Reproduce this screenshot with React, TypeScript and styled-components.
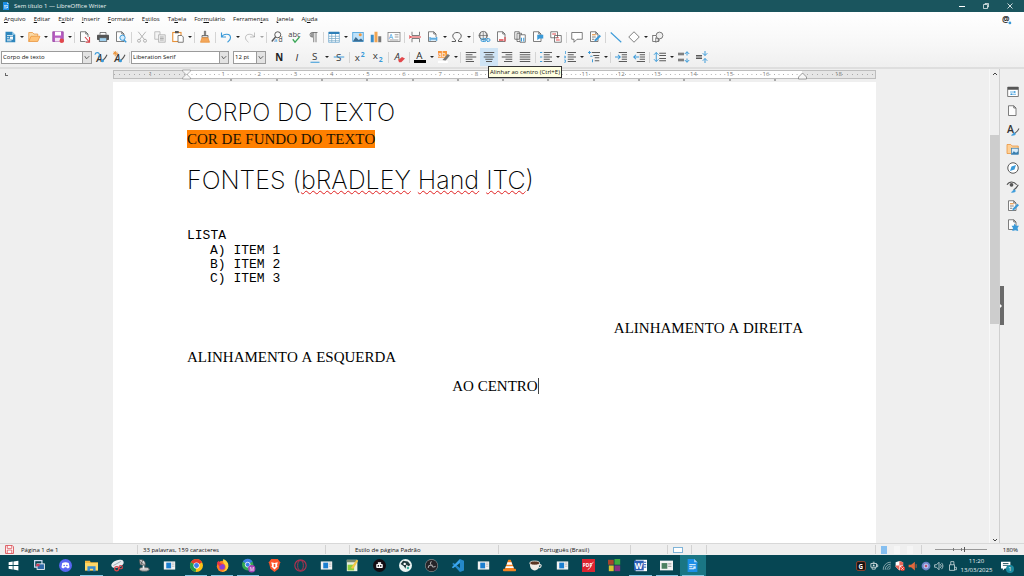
import React from "react";
import styled, { createGlobalStyle, css } from "styled-components";

const Global = createGlobalStyle`
  *, *::before, *::after { box-sizing: border-box; }
  body { margin: 0; background: #efefef; font-family: "Open Sans", "Noto Sans", sans-serif; font-size: 6px; font-weight: 500; color: #111; }
  button, select, input { font: inherit; color: inherit; margin: 0; padding: 0; border: 0; background: none; border-radius: 0; }
`;

const B = "#3a9ad9";
const G = "#555";
const O = "#e8923a";

const line = (d: string, stroke = G, w = 1) => <path d={d} stroke={stroke} strokeWidth={w} fill="none" />;
const sheet = (x = 2, y = 1) => (
  <path d={`M${x} ${y}h7l3 3v10h-10z M${x + 7} ${y}v3h3`} fill="#fdfdfd" stroke={G} strokeWidth="1" />
);
const bars = (rows: number[][], stroke = G) => (
  <>{rows.map(([x, y, w]) => <path key={`${x}-${y}`} d={`M${x} ${y}h${w}`} stroke={stroke} strokeWidth="1.3" />)}</>
);
const glyph = (t: string, x: number, y: number, size: number, fill = "#444", extra: React.SVGProps<SVGTextElement> = {}) => (
  <text x={x} y={y} fontSize={size} fill={fill} fontFamily="Open Sans, sans-serif" {...extra}>{t}</text>
);
const windowApp = (
  <>
    <rect x="1" y="3" width="14" height="10" fill="#f2f2f2" />
    <rect x="4" y="4.500" width="6" height="7" fill="#1b7fd0" />
    <path d="M11 5h3M11 7h3M11 9h3" stroke="#bbb" />
  </>
);

const icons: Record<string, React.ReactNode> = {
  doc: <><path d="M2 0h8l4 4v12H2z" fill="#1b8fe8" /><path d="M10 0l4 4h-4z" fill="#a7d5f5" /><path d="M4 7h8M4 9.500h4M4 12h6" stroke="#fff" strokeWidth="1.200" /><rect x="9" y="9" width="3" height="3" fill="#d7ecfb" /></>,
  new: <><path d="M2 1h9l4 4v10H2z" fill="#2e86bd" /><path d="M11 1l4 4h-4z" fill="#9fd0ee" /><path d="M4 6h8M4 8.500h3M4 11h8M4 13h6" stroke="#fff" /><rect x="8" y="7.500" width="4" height="3" fill="#fff" /></>,
  open: <><path d="M1 14V2h5l2 2h5v3" fill="#fbd9a5" stroke={O} /><path d="M1 14l3-7h12l-3 7z" fill="#ffc377" stroke={O} /></>,
  save: <><path d="M1 1h14v13H1z" fill="#b75cc2" stroke="#93409e" /><rect x="4" y="1" width="8" height="5" fill="#fff" /><rect x="4" y="9" width="7" height="5" fill="#f3e4f5" /><circle cx="13" cy="13" r="3" fill="#e2474b" /></>,
  pdf: <>{sheet(2, 1)}<path d="M8 8h6v6H8z" fill="#fff" /><path d="M8 8l6 7M14 8v7H9" stroke="#d9434a" strokeWidth="1.5" fill="none" /></>,
  print: <><path d="M4 5V2h8v3" fill="#fff" stroke={G} /><rect x="0" y="5" width="16" height="7" rx="1" fill="#555" /><rect x="3" y="9" width="10" height="5" fill="#9fd0ee" stroke="#555" /></>,
  preview: <>{sheet(2, 1)}<circle cx="10" cy="9" r="3.500" fill="#d7ecfb" stroke={B} strokeWidth="1.300" /><path d="M12 12l3 3" stroke={B} strokeWidth="2" /></>,
  cut: <g opacity=".55">{line("M3 1l8 10M13 1L5 11")}<circle cx="4" cy="13" r="2" fill="none" stroke={G} /><circle cx="12" cy="13" r="2" fill="none" stroke={G} /></g>,
  copy: <g opacity=".45"><path d="M1 1h7v10H1z" fill="#eee" stroke={G} /><path d="M6 5h9v10H6z" fill="#ddd" stroke={G} />{bars([[8, 8, 5], [8, 10, 5], [8, 12, 5]])}</g>,
  paste: <><rect x="1" y="2" width="11" height="12" fill="#fff" stroke={O} strokeWidth="1.500" /><rect x="4" y="0" width="5" height="3" fill={G} /><path d="M8 6h5l2 2v7H8z" fill="#fff" stroke={G} /></>,
  brush: <><path d="M7 0h2v6H7z" fill="#777" stroke={G} strokeWidth=".5" /><path d="M4 6h8v3H4z" fill="#ddd" stroke={G} /><path d="M4 9h8l2 6H2z" fill="#f3a75c" stroke={O} /></>,
  undo: <>{line("M2 2v6h6M2 8c3-5 12-5 12 1 0 3-2 4-4 6", B, 1.5)}</>,
  redo: <g opacity=".35">{line("M14 2v6H8M14 8C11 3 2 3 2 9c0 3 2 4 4 6", G, 1.3)}</g>,
  find: <><circle cx="9" cy="5" r="4" fill="none" stroke={G} strokeWidth="1.300" />{line("M6 8l-5 6", G, 1.8)}{glyph("a", 4, 15, 8, B)}{glyph("d", 10, 15, 9)}</>,
  spell: <>{glyph("abc", -1, 8, 10)}{line("M5 11l3 4 6-7", "#3aa757", 1.7)}</>,
  pilcrow: <><path d="M8 2a3 3 0 0 0 0 6z" fill="#999" />{line("M14 2H7a3 3 0 0 0 0 6h1M9 2v13M12 2v13")}</>,
  table: <><rect x="1" y="2" width="14" height="13" fill="#fff" stroke="#6aa6cf" /><rect x="1" y="1" width="14" height="3" fill="#2e7fb8" />{line("M1 7h14M1 10h14M1 13h14M5 4v11M10 4v11", "#77a9c8")}</>,
  image: <><rect x="1" y="2" width="14" height="12" fill="#bfe2fa" stroke={B} /><path d="M1 14l4-6 4 4 3-2 3 3v1z" fill="#3b6d93" /><circle cx="11" cy="5" r="2" fill="#f09a42" /></>,
  chart: <><rect x="1" y="5" width="4" height="10" fill="#3a8dca" /><rect x="6" y="1" width="4" height="14" fill="#f2a553" /><rect x="11" y="7" width="4" height="8" fill="#777" /></>,
  textbox: <><rect x="0" y="2" width="16" height="12" fill="#fff" stroke="#777" />{glyph("A", 1, 11, 9, B)}{bars([[9, 5, 5], [9, 8, 5], [2, 12, 12]], "#999")}</>,
  pagebreak: <>{line("M4 1v5h10V1M4 15v-5h10v5")}{line("M0 8h16", "#e2474b", 1.4)}{line("M0 6l3 2-3 2", "#e2474b")}</>,
  field: <>{sheet(2, 1)}<path d="M4 8h9v5H4z" fill="#cfe7f8" />{line("M4 8v5M13 8v5M5 10.500h7", B, 1.4)}</>,
  omega: <>{line("M1 14h5v-2C0 8 2 2 8 2s8 6 2 10v2h5", G, 1.3)}</>,
  link: <><circle cx="7" cy="6" r="5.500" fill="#eee" stroke={G} />{line("M1 6h12M7 1v11M4 1c-2 4-2 7 0 10M10 1c2 4 2 7 0 10", G, .8)}{line("M6 12h8M7 10h2a2 2 0 0 1 0 4H6a2 2 0 0 1 0-4M12 10h2a2 2 0 0 1 0 4h-2", B, 1.3)}</>,
  footnote: <>{sheet(2, 1)}<rect x="4" y="11" width="6" height="2" fill="#e2474b" />{line("M12 8v6", "#e2474b", 1.5)}</>,
  endnote: <><path d="M1 1h6v10H1zM4 3h6v11H4z" fill="#fff" stroke={G} /><path d="M8 5h7v10H8z" fill="#fff" stroke={G} />{line("M10 9v5M13 9v5", B, 1.4)}</>,
  bookmark: <>{sheet(2, 1)}<path d="M7 5v7l3-2h5V5z" fill={B} /></>,
  crossref: <><path d="M1 1h9v8H1zM6 6h9v9H6z" fill="#fff" stroke={G} />{line("M3 4h5M8 12h5", "#e2474b", 1.5)}{line("M8 9h4", "#e2474b")}</>,
  comment: <path d="M1 2h14v9H8l-4 4v-4H1z" fill="#fff" stroke={G} />,
  track: <>{sheet(2, 1)}{line("M4 5h5", O, 1.5)}{line("M4 8h5M4 11h3")}<path d="M7 14l1-3 6-6 2 2-6 6z" fill={B} /></>,
  lineTool: line("M1 2l14 13", B, 1.4),
  shape: <path d="M8 1l7 7-7 7-7-7z" fill="#fff" stroke={G} />,
  shapes: <><rect x="1" y="6" width="8" height="8" fill="#fff" stroke={G} /><circle cx="10" cy="6" r="4.500" fill="#eee" stroke={G} /><path d="M5 9l5 3-5 3z" fill="#fff" stroke={G} /></>,
  updStyle: <>{glyph("A", 2, 14, 13, "#333", { fontStyle: "italic", fontWeight: 600 })}{line("M0 5a3 3 0 1 1 4 3", B, 1.5)}{line("M10 13c1-2 3-1 6-8", G, 1.5)}<circle cx="10" cy="13" r="2" fill={B} /></>,
  newStyle: <>{glyph("A", 2, 14, 13, "#333", { fontStyle: "italic", fontWeight: 600 })}{line("M3 0v7M0 3h7M1 1l4 4M5 1L1 5", O, 1.3)}{line("M10 13c1-2 3-1 6-8", G, 1.5)}<circle cx="10" cy="13" r="2" fill={B} /></>,
  bold: glyph("N", 3, 13, 13, "#222", { fontWeight: 700 }),
  italic: glyph("I", 6, 13, 13, "#222", { fontStyle: "italic" }),
  under: <>{glyph("S", 4, 12, 13, "#333")}{line("M2 15h12", B, 1.4)}</>,
  strike: <>{glyph("S", 4, 13, 13, "#333")}{line("M1 8h14", B, 1.3)}</>,
  sup: <>{glyph("x", 1, 13, 13, "#333")}{glyph("2", 9, 8, 9, B, { fontWeight: 700 })}</>,
  sub: <>{glyph("x", 1, 11, 13, "#333")}{glyph("2", 9, 15, 9, B, { fontWeight: 700 })}</>,
  clear: <>{glyph("A", 2, 12, 13, "#333", { fontStyle: "italic" })}<path d="M7 12l5-4 4 2-5 5H8z" fill="#e2474b" /></>,
  color: <>{glyph("A", 3, 10, 13, "#222")}<rect x="0" y="12" width="16" height="4" fill="#000" /></>,
  highlight: <><rect x="0" y="0" width="12" height="9" fill="#f7953a" />{glyph("ab", 0, 8, 9, "#fff")}<path d="M6 12l7-8 3 2-6 7z" fill="#777" /><rect x="0" y="13" width="13" height="3" fill="#fff" /></>,
  left: bars([[1, 2, 14], [1, 5, 9], [1, 8, 14], [1, 11, 9], [1, 14, 11]]),
  center: bars([[1, 2, 14], [3, 5, 10], [1, 8, 14], [3, 11, 10], [4, 14, 8]]),
  right: bars([[1, 2, 14], [6, 5, 9], [1, 8, 14], [6, 11, 9], [4, 14, 11]]),
  justify: bars([[1, 2, 14], [1, 5, 14], [1, 8, 14], [1, 11, 14], [1, 14, 14]]),
  bullets: <>{bars([[5, 2, 11], [5, 5, 8], [5, 8, 11], [5, 11, 8], [5, 14, 11]])}{bars([[0, 2, 3], [0, 8, 3], [0, 14, 3]], B)}</>,
  numbers: <>{bars([[5, 2, 11], [5, 5, 8], [5, 8, 11], [5, 11, 8], [5, 14, 11]])}{line("M2 0v4M0 7h2v2H0M0 12h2v3H0", B)}</>,
  outline: <>{bars([[5, 2, 11], [7, 6, 8], [9, 9, 6], [9, 13, 6]])}{line("M0 2h4M2 0v4M3 7h3M6 11v4", B, 1.3)}</>,
  indent: <>{bars([[5, 2, 11], [9, 5, 7], [9, 11, 7], [5, 14, 11], [9, 8, 7]])}{line("M0 8h7M4 5l3 3-3 3", B, 1.4)}</>,
  outdent: <>{bars([[5, 2, 11], [9, 5, 7], [9, 11, 7], [5, 14, 11], [9, 8, 7]])}{line("M8 8H1M4 5L1 8l3 3", B, 1.4)}</>,
  spacing: <>{bars([[7, 3, 9], [7, 6, 9], [7, 10, 9], [7, 13, 9]])}{line("M3 2v12M0 5l3-3 3 3M0 11l3 3 3-3", B, 1.3)}</>,
  incPara: <>{bars([[0, 3, 8], [0, 5, 8], [0, 11, 8], [0, 13, 8]])}{line("M12 1v5M9 4l3-3 3 3M12 15v-5M9 12l3 3 3-3", B, 1.3)}</>,
  decPara: <>{bars([[0, 6, 8], [0, 10, 8], [0, 8, 8]])}{line("M12 0v6M9 3l3 3 3-3M12 16v-6M9 13l3-3 3 3", B, 1.3)}</>,
  props: <><rect x="1" y="2" width="14" height="12" fill="#fff" stroke={G} /><rect x="1" y="1" width="14" height="4" fill={G} />{line("M4 8h8M4 11h8", B)}{line("M10 7v2M6 10v2", B, 1.5)}</>,
  page: sheet(2, 1),
  styles: <>{glyph("A", 0, 12, 14, "#333", { fontWeight: 600 })}{line("M10 13c1-2 3-1 6-7", G, 1.4)}<path d="M6 15c2 0 2-4 4-3s2 3-4 3z" fill={B} stroke={B} /></>,
  gallery: <><path d="M0 14V2h5l2 2h8v10z" fill="#ffd096" stroke={O} /><rect x="6" y="7" width="9" height="8" fill="#d7ecfb" stroke="#3a7fb0" /><path d="M6 15l3-4 3 2 3-2v4z" fill="#3a7fb0" /></>,
  compass: <><circle cx="8" cy="8" r="7" fill="#fff" stroke={G} strokeWidth="1.300" /><path d="M12 4l-2 6-6 2 2-6z" fill={B} /></>,
  inspector: <>{line("M0 5c3-5 9-5 13 0", G, 1.5)}<circle cx="6" cy="5" r="2.500" fill={G} />{line("M9 12c1-2 3-1 6-7", G, 1.6)}<path d="M6 15c2 0 2-4 4-3s2 3-4 3z" fill={B} stroke={B} /></>,
  access: <>{sheet(2, 1)}<path d="M10 6l2 3h4l-2 3 1 4-4-1-4 1 1-4-2-3h3z" fill={B} /></>,
  at: <>{glyph("@", 0, 13, 15, "#333", { fontWeight: 700 })}<circle cx="14" cy="14" r="2.500" fill={B} /></>,
  floppy: <><path d="M1 1h12l2 2v12H1z" fill="#fff" stroke="#d9434a" strokeWidth="1.500" />{line("M4 1v5h8V1M4 15v-6h8v6", "#d9434a", 1.3)}</>,
  start: <path d="M2 4l5-1v4.500H2zM8 3l6-1v5.500H8zM2 8.500h5V13l-5-1zM8 8.500h6V14l-6-1z" fill="#fff" />,
  taskview: <><rect x="2" y="2" width="9" height="8" fill="none" stroke="#cfdcf4" strokeWidth="1.500" /><rect x="5" y="6" width="9" height="7" fill="#2e69a8" stroke="#fff" /><rect x="4" y="6" width="4" height="3" fill="#d43c59" /></>,
  discord: <><circle cx="8" cy="8" r="8" fill="#5865f2" /><path d="M4 5c3-1.500 5-1.500 8 0l1 5c-1 1-2 1.500-3 1.500L9 10H7l-1 1.500c-1 0-2-.5-3-1.500z" fill="#fff" /><circle cx="6.300" cy="8" r="1" fill="#5865f2" /><circle cx="9.700" cy="8" r="1" fill="#5865f2" /></>,
  explorer: <><path d="M0 2h6l1 2h9v10H0z" fill="#f5b83d" /><path d="M0 5h16v9H0z" fill="#ffd968" /><path d="M3 9h10v6h-3v-3H6v3H3z" fill="#3b8dd0" /></>,
  snip: <><ellipse cx="8" cy="6" rx="8" ry="4.500" fill="#e8ecef" transform="rotate(-20 8 6)" />{line("M3 8l9-5", "#9babb5", 1.2)}<circle cx="7" cy="12" r="2.500" fill="none" stroke="#d9434a" strokeWidth="1.500" /><circle cx="12" cy="10" r="2" fill="none" stroke="#d9434a" strokeWidth="1.500" /></>,
  satellite: <><path d="M3 1c5-1 8 2 7 7L4 7z" fill="#ddd" stroke="#555" />{line("M4 3l6 5M7 1l-2 6", "#555")}<ellipse cx="9" cy="12.500" rx="6" ry="2.500" fill="#c9c9c9" stroke="#555" />{line("M8 12V8", "#eee", 2)}</>,
  win: windowApp,
  chrome: <><circle cx="8" cy="8" r="8" fill="#fbc116" /><path d="M8 8L1 4a8 8 0 0 1 14 0z" fill="#e33b2e" /><path d="M8 8L1 4a8 8 0 0 0 6 12z" fill="#229a4c" /><circle cx="8" cy="8" r="3.800" fill="#fff" /><circle cx="8" cy="8" r="3" fill="#3b7ded" /></>,
  firefox: <><circle cx="8" cy="9" r="7" fill="#ff7b22" /><path d="M9 0c5 2 7 6 6 10-1 4-5 6-8 5 5 0 6-5 4-8-2-2-3-4-2-7z" fill="#ffd23a" /><circle cx="7.500" cy="9.500" r="3.500" fill="#8a3fd8" /><path d="M1 5l2-3 2 3 3 1-4 3z" fill="#e8324b" /></>,
  chromeM: <><circle cx="7" cy="7" r="7" fill="#34a853" /><path d="M7 7L1 3a7 7 0 0 1 12 0z" fill="#3f7fe8" /><circle cx="7" cy="7" r="3" fill="#3b7ded" stroke="#fff" /><circle cx="12" cy="12" r="4.500" fill="#a645b8" />{glyph("M", 9.5, 14.5, 6, "#fff")}</>,
  brave: <><path d="M4 0h8l3 4-2 8-5 4-5-4-2-8z" fill="#fb542b" /><path d="M4 4l4 1 4-1-1 4 1 1-4 4-4-4 1-1z" fill="#fff" /><path d="M7 6h2v4H7z" fill="#fb542b" /></>,
  opera: <><circle cx="8" cy="8" r="7" fill="none" stroke="#b0304f" strokeWidth="1.400" /><ellipse cx="8" cy="8" rx="3.500" ry="6" fill="none" stroke="#b0304f" strokeWidth="1.200" /></>,
  notepad: <><rect x="1" y="1" width="13" height="14" fill="#e8efe0" /><rect x="1" y="1" width="13" height="3" fill="#7a8a70" /><path d="M2 7h8v7H2z" fill="#8fce3d" /><path d="M6 11l7-10 2 1-6 10z" fill="#f2c744" /></>,
  robot: <><circle cx="8" cy="8" r="8" fill="#120c12" /><rect x="4" y="6" width="8" height="5" rx="1" fill="#fff" /><path d="M6 4h4v2H6z" fill="#fff" /><circle cx="6.500" cy="8.500" r="1" fill="#120c12" /><circle cx="9.500" cy="8.500" r="1" fill="#120c12" /></>,
  dino: <><circle cx="8" cy="8" r="8" fill="#e9f3f2" /><path d="M2 6l3-4 6 1 3 4-2 2-3-2-1 5-2-3z" fill="#1f3a3d" /><circle cx="7" cy="6" r="1.500" fill="#fff" /><circle cx="11" cy="11" r="1.500" fill="#3cb4a0" /></>,
  obs: <><circle cx="8" cy="8" r="8" fill="#8b8b8d" /><circle cx="8" cy="8" r="7.200" fill="#252428" />{line("M8 3c-2 2-2 4 1 5M13 9c-3 2-5 0-4-2M4 11c0-3 2-4 5-3", "#a9a9ab", 1.3)}</>,
  vscode: <><path d="M11 0l5 2v12l-5 2-8-8.500L1.500 6 3 4.500 11 11z" fill="#2489ca" /><path d="M11 0v5L2.500 11.500 1 10z" fill="#3ba6ee" /></>,
  vlc: <><path d="M6.500 1h3L14 13H2z" fill="#f58220" /><path d="M5.500 4h5l1 3h-7zM3.500 9h9l.8 2H2.800z" fill="#fff" /><rect x="0" y="12" width="16" height="3" rx="1" fill="#f58220" /></>,
  coffee: <><path d="M1 5h12c0 6-2 9-6 9S1 11 1 5z" fill="#f0ece7" /><ellipse cx="7" cy="5" rx="6" ry="2.500" fill="#5a3522" stroke="#f0ece7" />{line("M12 7c4-1 4 3 0 4", "#f0ece7", 1.3)}</>,
  pdfx: <><rect width="16" height="16" fill="#dc2430" />{glyph("PDF", 1, 10, 6, "#fff", { fontWeight: 700 })}{line("M7 13c5-2 4-8 7-9", "#fff")}</>,
  squares: <><rect x="0" y="1" width="7" height="6" fill="#a5442d" /><rect x="8" y="0" width="7" height="7" fill="#3da93e" /><rect x="1" y="8" width="6" height="7" fill="#d9c331" /><rect x="8" y="8" width="7" height="7" fill="#8a3080" /></>,
  word: <><rect x="2" y="1" width="14" height="14" fill="#fff" /><rect x="0" y="2" width="12" height="12" fill="#2b5fb8" />{glyph("W", 1, 12, 10, "#fff", { fontWeight: 700 })}{bars([[12, 4, 3], [12, 7, 3], [12, 10, 3]], "#2b5fb8")}</>,
  card: <><rect x="0" y="2" width="16" height="12" fill="#f3f3f3" /><rect x="2" y="5" width="7" height="7" fill="#4c8060" />{bars([[10, 6, 4], [10, 9, 4]], "#999")}</>,
  gapp: <><rect x="1" y="1" width="14" height="14" rx="2" fill="#111" stroke="#a4442c" strokeWidth="1.500" />{glyph("G", 4, 12, 10, "#fff", { fontWeight: 700 })}</>,
  cam: <>{line("M3 4h9v6H3zM5 10v3h5v-3M12 6h2v3h-2M6 2h3", "#d9e4e6", 1.3)}<circle cx="7.500" cy="7" r="1.500" fill="#d9e4e6" /></>,
  wifi: <>{line("M2 14C2 7 7 2 14 2M5 14c0-5 4-9 9-9M8 14c0-3 3-6 6-6M11 14c0-2 1-3 3-3", "#b5c8cc", 1.2)}</>,
  shield: <><path d="M1 2l6-2 6 2v7l-6 6-6-6z" fill="#fff" /><path d="M7 0l6 2v5H7zM1 7h6v8L1 9z" fill="#e8685a" /><circle cx="12" cy="12" r="4" fill="#e33b2e" />{line("M10 10l4 4M14 10l-4 4", "#fff")}</>,
  horn: <><path d="M1 6h4l6-5v14l-6-5H1z" fill="#e2683c" />{line("M13 5v6", "#e2683c", 1.3)}</>,
  disc: <><circle cx="8" cy="8" r="7" fill="#6f83c8" /><circle cx="8" cy="8" r="4" fill="#b6c4ec" /><circle cx="8" cy="8" r="2" fill="#c04d70" /></>,
  volume: <>{line("M1 6h3l4-4v12l-4-4H1zM10 5c2 2 2 4 0 6M12 3c3 3 3 7 0 10", "#d9e4e6", 1.2)}</>,
  usb: <>{line("M4 6h8v9H4zM6 6V1h5v5M12 10h3v4h-3", "#d9e4e6", 1.2)}</>,
  notify: <><path d="M0 1h15v11H6l-3 3v-3H0z" fill="#fff" />{bars([[3, 4, 9], [3, 7, 9]], "#0b4450")}</>,
  hour: <path d="M1 0h14v2L9 8l6 6v2H1v-2l6-6-6-6z" fill="#f7f7f7" stroke="#777" />,
};

const Svg = styled.svg<{ $s: number }>`
  display: block;
  flex: none;
  width: ${(p) => p.$s}px;
  height: ${(p) => p.$s}px;
  overflow: visible;
`;
const Icon = ({ name, size = 12 }: { name: string; size?: number }) => (
  <Svg $s={size} viewBox="0 0 16 16" aria-hidden="true">{icons[name]}</Svg>
);

const Window = styled.div`
  display: flex;
  flex-direction: column;
  height: 100vh;
  overflow: hidden;
`;
const TitleBar = styled.header`
  flex: none;
  display: flex;
  align-items: center;
  gap: 4px;
  height: 12px;
  padding: 0 4px 0 2px;
  background: #1a555e;
  color: #eef5f5;
  white-space: nowrap;
`;
const Title = styled.h1`
  flex: 1;
  margin: 0;
  font-size: 6px;
  font-weight: 400;
`;
const Caption = styled.button`
  display: flex;
  justify-content: center;
  width: 20px;
`;
const Chrome = styled.div`
  flex: none;
  background: linear-gradient(#ffffff, #f7f7f7 60%, #efefef);
  border-bottom: 2px solid #dedede;
`;
const MenuBar = styled.nav`
  display: flex;
  align-items: center;
  gap: 8px;
  height: 15px;
  padding: 0 13px 0 4px;
  white-space: nowrap;
`;
const MenuItem = styled.button`
  line-height: 9px;
  u { text-underline-offset: 1px; }
`;
const Spacer = styled.span`
  flex: 1;
`;
const Toolbar = styled.div`
  display: flex;
  align-items: center;
  height: 20px;
  padding-left: 1px;
`;
const ToolButton = styled.button<{ $on?: boolean }>`
  flex: none;
  display: flex;
  align-items: center;
  justify-content: center;
  width: 18px;
  height: 18px;
  ${(p) => p.$on && css`background: #cfe4f5;`}
`;
const Arrow = styled.button<{ $dim?: boolean }>`
  flex: none;
  width: 6px;
  height: 18px;
  display: flex;
  align-items: center;
  justify-content: center;
  opacity: ${(p) => (p.$dim ? 0.4 : 1)};
  &::before {
    content: "";
    border: 2px solid transparent;
    border-top-color: #222;
    border-bottom-width: 0;
  }
`;
const Divider = styled.span`
  flex: none;
  width: 1px;
  height: 11px;
  margin: 0 1px;
  background: #d4d4d4;
`;
const Combo = styled.label<{ $w: number }>`
  flex: none;
  position: relative;
  width: ${(p) => p.$w}px;
  height: 13px;
  margin-right: 4px;
  border: 1px solid #9b9b9b;
  background: #fff;
  &:first-child { margin-right: 0; }
  select {
    display: block;
    width: 100%;
    height: 11px;
    padding-left: 1px;
    appearance: none;
    outline: 0;
  }
  svg {
    position: absolute;
    top: 0;
    right: 0;
    width: 9px;
    height: 11px;
    background: #e3e3e3;
    border-left: 1px solid #9b9b9b;
    pointer-events: none;
  }
`;

type Tool = { i: string; t: string; arrow?: boolean; dim?: boolean; on?: boolean } | "|";
const standard: Tool[] = [
  { i: "new", t: "Novo", arrow: true }, { i: "open", t: "Abrir", arrow: true }, { i: "save", t: "Salvar", arrow: true }, "|",
  { i: "pdf", t: "Exportar como PDF" }, { i: "print", t: "Imprimir" }, { i: "preview", t: "Visualizar impressão" }, "|",
  { i: "cut", t: "Cortar" }, { i: "copy", t: "Copiar" }, { i: "paste", t: "Colar", arrow: true }, "|",
  { i: "brush", t: "Clonar formatação" }, "|",
  { i: "undo", t: "Desfazer", arrow: true }, { i: "redo", t: "Refazer", arrow: true, dim: true }, "|",
  { i: "find", t: "Localizar e substituir" }, { i: "spell", t: "Ortografia" }, { i: "pilcrow", t: "Marcas de formatação" }, "|",
  { i: "table", t: "Inserir tabela", arrow: true }, { i: "image", t: "Inserir imagem" }, { i: "chart", t: "Inserir gráfico" }, { i: "textbox", t: "Inserir caixa de texto" }, "|",
  { i: "pagebreak", t: "Inserir quebra de página" }, { i: "field", t: "Inserir campo", arrow: true }, { i: "omega", t: "Inserir caractere especial", arrow: true }, "|",
  { i: "link", t: "Inserir hiperlink" }, { i: "footnote", t: "Inserir nota de rodapé" }, { i: "endnote", t: "Inserir nota de fim" }, { i: "bookmark", t: "Inserir marcador" }, { i: "crossref", t: "Inserir referência" }, "|",
  { i: "comment", t: "Inserir anotação" }, { i: "track", t: "Registrar alterações" }, "|",
  { i: "lineTool", t: "Inserir linha" }, { i: "shape", t: "Formas simples", arrow: true }, { i: "shapes", t: "Mostrar funções de desenho" },
];
const formatting: Tool[] = [
  { i: "bold", t: "Negrito" }, { i: "italic", t: "Itálico" }, { i: "under", t: "Sublinhado", arrow: true }, { i: "strike", t: "Tachado" }, "|",
  { i: "sup", t: "Sobrescrito" }, { i: "sub", t: "Subscrito" }, "|", { i: "clear", t: "Limpar formatação" }, "|",
  { i: "color", t: "Cor da fonte", arrow: true }, { i: "highlight", t: "Cor de realce", arrow: true }, "|",
  { i: "left", t: "Alinhar à esquerda" }, { i: "center", t: "Alinhar ao centro", on: true }, { i: "right", t: "Alinhar à direita" }, { i: "justify", t: "Justificar" }, "|",
  { i: "bullets", t: "Marcadores", arrow: true }, { i: "numbers", t: "Numeração", arrow: true }, { i: "outline", t: "Estrutura de tópicos", arrow: true }, "|",
  { i: "indent", t: "Aumentar recuo" }, { i: "outdent", t: "Diminuir recuo" }, "|",
  { i: "spacing", t: "Entrelinhas", arrow: true }, { i: "incPara", t: "Aumentar espaçamento" }, { i: "decPara", t: "Diminuir espaçamento" },
];
const Anchor = styled.span`
  position: relative;
  flex: none;
`;
const Tooltip = styled.span`
  position: absolute;
  z-index: 5;
  top: 18px;
  left: 8px;
  padding: 0 1px;
  border: 1px solid #333;
  background: #ffffe1;
  line-height: 10px;
  white-space: nowrap;
`;
const Tools = ({ items }: { items: Tool[] }) => (
  <>
    {items.map((it, n) =>
      it === "|" ? <Divider key={n} /> : (
        <React.Fragment key={n}>
          {it.on ? (
            <Anchor>
              <ToolButton $on aria-label={it.t} aria-describedby="tip"><Icon name={it.i} /></ToolButton>
              <Tooltip id="tip" role="tooltip">Alinhar ao centro (Ctrl+E)</Tooltip>
            </Anchor>
          ) : (
            <ToolButton aria-label={it.t}><Icon name={it.i} /></ToolButton>
          )}
          {it.arrow && <Arrow $dim={it.dim} aria-label={`${it.t}: opções`} />}
        </React.Fragment>
      )
    )}
  </>
);
const StyleCombo = ({ w, label, value }: { w: number; label: string; value: string }) => (
  <Combo $w={w}>
    <select aria-label={label} defaultValue={value}><option>{value}</option></select>
    <svg viewBox="0 0 9 11" aria-hidden="true"><path d="M2 4l2 3 3-3" fill="none" stroke="#555" /></svg>
  </Combo>
);

const Main = styled.div`
  flex: 1;
  display: flex;
  min-height: 0;
`;
const Editor = styled.main`
  flex: 1;
  display: flex;
  flex-direction: column;
  min-width: 0;
`;
const RulerRow = styled.div`
  flex: none;
  display: flex;
  justify-content: center;
  height: 13px;
  padding-top: 1px;
  position: relative;
`;
const TabMark = styled.span`
  position: absolute;
  left: 5px;
  top: 4px;
  width: 3px;
  height: 3px;
  border: solid #666;
  border-width: 0 0 1px 1px;
`;
const Ruler = styled.div`
  display: flex;
  width: 763px;
  max-width: 100%;
  height: 9px;
  border: 1px solid #bdbdbd;
  background: #e6e6e6;
  color: #777;
  line-height: 7px;
`;
const ticks = css`
  background-image: linear-gradient(90deg, #aaa 1px, transparent 1px);
  background-repeat: repeat-x;
  background-position: 0 3px;
`;
const Margin = styled.div`
  ${ticks}
  background-size: 5px 1px;
  width: 73px;
  display: flex;
  justify-content: center;
`;
const Scale = styled.div`
  ${ticks}
  background-color: #fff;
  background-size: calc(100% / 136) 1px;
  flex: 1;
  display: grid;
  grid-template-columns: repeat(16, 1fr);
  justify-items: center;
  padding: 0 18px;
  position: relative;
`;
const ScaleNumber = styled.span`
  height: 7px;
  background: #fff;
`;
const Handle = styled.span<{ $end?: boolean }>`
  position: absolute;
  top: -1px;
  ${(p) => (p.$end ? "right: -5px" : "left: -5px")};
`;
const Stops = styled.div`
  position: absolute;
  left: 0;
  right: 26px;
  top: 8px;
  display: grid;
  grid-template-columns: repeat(13, 1fr);
  justify-items: end;
  i { width: 2px; height: 2px; background: #aaa; }
`;
const Page = styled.article`
  flex: 1;
  width: 763px;
  max-width: 100%;
  margin: 0 auto;
  padding: 16px 73px 0 74px;
  background: #fff;
  color: #000;
  font: 15px/29px "Liberation Serif", "Times New Roman", serif;
  p { margin: 0; }
`;
const Hand = styled.p<{ $size: number }>`
  font: 200 ${(p) => p.$size}px/30px "Bradley Hand ITC", Inter, sans-serif;
`;
const Misspelt = styled.span`
  text-decoration: underline wavy #e02020 1px;
  text-underline-offset: 1px;
  text-decoration-skip-ink: none;
`;
const Mark = styled.mark`
  display: block;
  width: fit-content;
  margin: 2px 0 17px;
  background: #ff8000;
  color: #1d1200;
  line-height: 18px;
  font-kerning: none;
`;
const Mono = styled.div`
  margin: 34px 0 28px;
  font: 13px/14px "Liberation Mono", "Courier New", monospace;
  p { margin-bottom: 1px; }
  ol { margin: 0; padding: 0 0 0 23px; list-style: none; }
`;
const Line = styled.p<{ $a: "left" | "right" | "center" }>`
  text-align: ${(p) => p.$a};
  font-kerning: none;
`;
const Caret = styled.span`
  display: inline-block;
  width: 1px;
  height: 16px;
  margin-right: -1px;
  vertical-align: -3px;
  background: #444;
`;

const ScrollBar = styled.div`
  flex: none;
  width: 10px;
  display: flex;
  flex-direction: column;
  justify-content: space-between;
  align-items: center;
  padding: 2px 0 0;
  border-left: 1px solid #f8f8f8;
  svg { display: block; width: 6px; height: 6px; }
`;
const Track = styled.div`
  flex: 1;
  align-self: stretch;
  padding-top: 58px;
`;
const Thumb = styled.div`
  height: 47%;
  background: #cdcdcd;
`;
const Sidebar = styled.aside`
  flex: none;
  position: relative;
  width: 25px;
  padding: 13px 0 0 3px;
  border-left: 1px solid #cfcfcf;
`;
const SideButton = styled.button`
  display: flex;
  align-items: center;
  justify-content: center;
  width: 20px;
  height: 19px;
`;
const Grip = styled.button`
  position: absolute;
  left: 0;
  top: 217px;
  width: 4px;
  height: 39px;
  display: flex;
  align-items: center;
  background: #6a6a6a;
  &::before {
    content: "";
    border: 2px solid transparent;
    border-left-color: #fff;
    border-right-width: 0;
  }
`;

const StatusBar = styled.footer`
  flex: none;
  display: flex;
  align-items: center;
  height: 12px;
  border-top: 1px solid #d8d8d8;
  background: #efefef;
  white-space: nowrap;
`;
const Cell = styled.div<{ $w?: number; $center?: boolean }>`
  ${(p) => (p.$w ? `flex: none; width: ${p.$w}px;` : "flex: 1;")}
  display: flex;
  align-items: center;
  justify-content: ${(p) => (p.$center ? "center" : "flex-start")};
  gap: 7px;
  height: 9px;
  padding-left: ${(p) => (p.$center ? 0 : 5)}px;
  border-right: 1px solid #d2d2d2;
`;
const ZoomCell = styled.div`
  flex: none;
  display: flex;
  align-items: center;
  justify-content: space-between;
  width: 102px;
  padding: 0 6px 0 13px;
`;
const SelBox = styled.span`
  width: 10px;
  height: 6px;
  border: 1px solid #7fb4d8;
  background: #fff;
`;
const View = styled.span<{ $on?: boolean }>`
  width: 6px;
  height: 8px;
  background: ${(p) => (p.$on ? "#86bff0" : "#f5f5f5")};
`;
const Zoom = styled.input`
  appearance: none;
  width: 52px;
  height: 7px;
  background:
    linear-gradient(#777, #777) 18px 2px / 1px 3px no-repeat,
    linear-gradient(#777, #777) 26px 2px / 1px 3px no-repeat,
    linear-gradient(#999, #999) center / 100% 1px no-repeat;
  &::-webkit-slider-thumb { appearance: none; width: 1px; height: 5px; background: #555; }
`;

const TaskBar = styled.div`
  flex: none;
  display: flex;
  height: 21px;
  background: #064653;
  color: #e8f1f2;
`;
const Apps = styled.div`
  display: flex;
  width: 706px;
`;
const TaskButton = styled.button<{ $run?: boolean; $active?: boolean }>`
  flex: 1;
  display: flex;
  align-items: center;
  justify-content: center;
  background: ${(p) => (p.$active ? "#1a7684" : "none")};
  position: relative;
  ${(p) => p.$run && css`
    &::after {
      content: "";
      position: absolute;
      left: 2px;
      right: 2px;
      bottom: 0;
      height: 1px;
      background: #86c8e4;
    }
  `}
`;
const Tray = styled.div`
  display: flex;
  align-items: center;
  margin-left: auto;
  padding-right: 13px;
  gap: 3px;
`;
const Clock = styled.time`
  width: 33px;
  margin-right: 5px;
  text-align: center;
  line-height: 9px;
`;
const Notice = styled.button`
  position: relative;
`;
const Badge = styled.span`
  position: absolute;
  left: 5px;
  top: 4px;
  width: 8px;
  height: 8px;
  border-radius: 50%;
  background: #1b8ba0;
  line-height: 8px;
  text-align: center;
`;

const menus: [string, string, string][] = [
  ["", "A", "rquivo"], ["", "E", "ditar"], ["E", "x", "ibir"], ["", "I", "nserir"], ["", "F", "ormatar"], ["E", "s", "tilos"],
  ["Ta", "b", "ela"], ["For", "m", "ulário"], ["Ferramen", "t", "as"], ["", "J", "anela"], ["Aj", "u", "da"],
];
const scale = ["1", "2", "3", "4", "5", "6", "7", "8", "", "", "11", "12", "13", "14", "15", "16"];
const side: [string, string][] = [
  ["props", "Propriedades"], ["page", "Página"], ["styles", "Estilos"], ["gallery", "Galeria"],
  ["compass", "Navegador"], ["inspector", "Inspetor de estilos"], ["track", "Gerenciar alterações"], ["access", "Verificação de acessibilidade"],
];
const apps = ["start", "taskview", "discord", "explorer", "snip", "satellite", "win", "chrome", "firefox", "chromeM", "brave", "opera", "win", "notepad", "robot", "dino", "obs", "vscode", "win", "vlc", "coffee", "win", "pdfx", "squares", "word", "card", "doc"];
const running = [3, 7, 8, 9, 24, 25, 26];
const tray = ["gapp", "cam", "wifi", "shield", "horn", "disc", "volume", "usb"];

export default function App() {
  return (
    <Window>
      <Global />
      <TitleBar>
        <Icon name="doc" size={8} />
        <Title>Sem título 1 — LibreOffice Writer</Title>
        <Caption aria-label="Minimizar"><Svg $s={6} viewBox="0 0 6 6"><path d="M0 3.500h6" stroke="#fff" /></Svg></Caption>
        <Caption aria-label="Restaurar"><Svg $s={6} viewBox="0 0 6 6"><path d="M.5 1.500h4v4h-4zM2 1.500V.5h3.500V4h-1" fill="none" stroke="#fff" strokeWidth=".7" /></Svg></Caption>
        <Caption aria-label="Fechar"><Svg $s={6} viewBox="0 0 6 6"><path d="M.5.5l5 5M5.500.5l-5 5" stroke="#fff" strokeWidth=".8" /></Svg></Caption>
      </TitleBar>
      <Chrome>
        <MenuBar>
          {menus.map(([a, k, b]) => <MenuItem key={a + k + b}>{a}<u>{k}</u>{b}</MenuItem>)}
          <Spacer />
          <Icon name="at" size={9} />
        </MenuBar>
        <Toolbar><Tools items={standard} /></Toolbar>
        <Toolbar>
          <StyleCombo w={91} label="Estilo de parágrafo" value="Corpo de texto" />
          <Tools items={[{ i: "updStyle", t: "Atualizar estilo" }, { i: "newStyle", t: "Novo estilo" }, "|"]} />
          <StyleCombo w={98} label="Nome da fonte" value="Liberation Serif" />
          <StyleCombo w={33} label="Tamanho da fonte" value="12 pt" />
          <Tools items={formatting} />
        </Toolbar>
      </Chrome>
      <Main>
        <Editor>
          <RulerRow>
            <TabMark />
            <Ruler>
              <Margin>1</Margin>
              <Scale>
                {scale.map((n, k) => <ScaleNumber key={k}>{n}</ScaleNumber>)}
                <Handle><Icon name="hour" size={9} /></Handle>
                <Handle $end><Svg $s={9} viewBox="0 0 9 9"><path d="M4.500 3l4 4v2h-8V7z" fill="#f7f7f7" stroke="#777" strokeWidth=".7" /></Svg></Handle>
                <Stops>{Array.from({ length: 13 }, (_, n) => <i key={n} />)}</Stops>
              </Scale>
              <Margin>18</Margin>
            </Ruler>
          </RulerRow>
          <Page>
            <Hand $size={24}>CORPO DO TEXTO</Hand>
            <Mark>COR DE FUNDO DO TEXTO</Mark>
            <Hand $size={25}>FONTES (<Misspelt>bRADLEY</Misspelt> <Misspelt>Hand</Misspelt> <Misspelt>ITC</Misspelt>)</Hand>
            <Mono>
              <p>LISTA</p>
              <ol>
                <li>A) ITEM 1</li>
                <li>B) ITEM 2</li>
                <li>C) ITEM 3</li>
              </ol>
            </Mono>
            <Line $a="right">ALINHAMENTO A DIREITA</Line>
            <Line $a="left">ALINHAMENTO A ESQUERDA</Line>
            <Line $a="center">AO CENTRO<Caret /></Line>
          </Page>
        </Editor>
        <ScrollBar>
          <svg viewBox="0 0 6 6" aria-hidden="true"><path d="M1 4l2-2 2 2" fill="none" stroke="#444" /></svg>
          <Track><Thumb /></Track>
          <svg viewBox="0 0 6 6" aria-hidden="true"><path d="M1 2l2 2 2-2" fill="none" stroke="#444" /></svg>
        </ScrollBar>
        <Sidebar>
          {side.map(([i, t]) => <SideButton key={i} aria-label={t}><Icon name={i} /></SideButton>)}
          <Grip aria-label="Ocultar barra lateral" />
        </Sidebar>
      </Main>
      <StatusBar>
        <Cell $w={138}><Icon name="floppy" size={9} />Página 1 de 1</Cell>
        <Cell $w={188}>33 palavras, 159 caracteres</Cell>
        <Cell $w={24} />
        <Cell $w={149}>Estilo de página Padrão</Cell>
        <Cell $w={132} $center>Português (Brasil)</Cell>
        <Cell $w={37} />
        <Cell $w={24}><SelBox /></Cell>
        <Cell $w={15} />
        <Cell />
        <Cell $w={46}><View $on /><View /><View /></Cell>
        <ZoomCell>
          <Zoom type="range" aria-label="Zoom" min={20} max={600} defaultValue={350} />
          <span>180%</span>
        </ZoomCell>
      </StatusBar>
      <TaskBar>
        <Apps>
          {apps.map((a, n) => (
            <TaskButton key={n} $run={running.includes(n)} $active={n === 26} aria-label={a}><Icon name={a} size={13} /></TaskButton>
          ))}
        </Apps>
        <Tray>
          {tray.map((t) => <Icon key={t} name={t} size={10} />)}
          <Clock>11:20<br />13/03/2025</Clock>
          <Notice aria-label="Notificações"><Icon name="notify" size={10} /><Badge>1</Badge></Notice>
        </Tray>
      </TaskBar>
    </Window>
  );
}
